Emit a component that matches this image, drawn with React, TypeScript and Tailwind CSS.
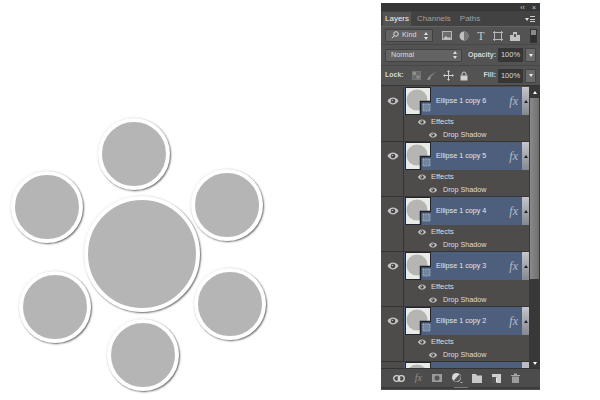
import React from "react";

const Eye = ({ className = "" }: { className?: string }) => (
  <svg width="12" height="8" viewBox="0 0 12 8" className={className}>
    <path d="M0.5 4C2 1.6 4 .6 6 .6s4 1 5.500 3.400C10 6.400 8 7.400 6 7.400S2 6.400 .5 4z" fill="#c4c4c4" />
    <circle cx="6" cy="4" r="2.300" fill="#444" />
    <circle cx="5.400" cy="3.400" r=".7" fill="#c4c4c4" />
  </svg>
);

const Thumb = () => (
  <svg width="26" height="28" viewBox="0 0 26 28" className="shrink-0">
    <rect x=".5" y=".5" width="25" height="27" fill="#e9ebe6" stroke="#22252b" />
    <circle cx="12" cy="13" r="10.500" fill="#b5b5b3" />
    <path d="M26 14h-10v14h10z" fill="#4f6180" />
    <path d="M15.500 28v-13.500h10.500" fill="none" stroke="#1c1f25" strokeWidth="1.500" />
    <rect x="18" y="17" width="7" height="7" fill="#6f869e" stroke="#c4d2de" strokeWidth=".7" strokeDasharray="1 .7" />
  </svg>
);

const Layer = ({ name }: { name: string }) => (
  <div className="flex h-[55px] shrink-0 border-b border-[#353535]">
    <div className="flex h-[28px] w-[22px] shrink-0 items-center justify-center pl-[1px]">
      <Eye />
    </div>
    <div className="flex min-w-0 flex-1 flex-col border-l border-[#333]">
      <div className="flex h-[28px] shrink-0 items-center bg-[#4e5f7d] pl-[1px] text-[#e4e7ec]">
        <Thumb />
        <span className="ml-[5px] flex-1 text-[7.200px] leading-none">{name}</span>
        <span className="mr-[4px] font-['Liberation_Serif',serif] text-[12px] italic leading-none text-[#b4bcc9]">fx</span>
        <div className="flex h-full w-[7px] items-center justify-center bg-gradient-to-b from-[#c6c6cc] to-[#84888f]">
          <div className="h-0 w-0 border-x-[2px] border-b-[3px] border-x-transparent border-b-[#222]" />
        </div>
      </div>
      <div className="flex h-[13px] items-center pl-[12px] text-[7.500px] leading-none text-[#dedede]">
        <Eye className="mr-[3px] scale-75" />
        Effects
      </div>
      <div className="flex h-[13px] items-center pl-[23px] text-[7.200px] leading-none text-[#dedede]">
        <Eye className="mr-[4px] scale-75" />
        Drop Shadow
      </div>
    </div>
  </div>
);

const Spin = () => (
  <div className="flex flex-col gap-[2px]">
    <div className="h-0 w-0 border-x-[2px] border-b-[3px] border-x-transparent border-b-[#ddd]" />
    <div className="h-0 w-0 border-x-[2px] border-t-[3px] border-x-transparent border-t-[#ddd]" />
  </div>
);

const Select = ({ className, children }: { className: string; children: React.ReactNode }) => (
  <div className={`flex h-[13px] items-center justify-between rounded-[1px] border border-[#414141] bg-[#636363] pl-[5px] pr-[4px] text-[7.200px] text-[#dcdcdc] ${className}`}>
    {children}
    <Spin />
  </div>
);

const PercentField = () => (
  <div className="flex items-center gap-[2px]">
    <div className="flex h-[14px] w-[25px] items-center justify-center bg-[#363636] text-[7.500px] text-[#d8d8d8]">100%</div>
    <div className="flex h-[14px] w-[11px] items-center justify-center border border-[#444] bg-[#6a6a6a]">
      <div className="h-0 w-0 border-x-[2px] border-t-[3px] border-x-transparent border-t-[#eee]" />
    </div>
  </div>
);

const Circle = ({ className }: { className: string }) => (
  <div className={`absolute rounded-full border-[4px] border-white bg-[#b5b5b5] shadow-[1px_1px_2px_rgba(0,0,0,0.6),-1px_-1px_3px_rgba(0,0,0,0.04)] ${className}`} />
);

const App = () => {
  return (
    <div className="flex h-[400px] w-[600px] overflow-hidden bg-white font-['Liberation_Sans',sans-serif]">
      <div className="relative h-full w-[381px] shrink-0">
        <Circle className="left-[98px] top-[118px] h-[72px] w-[72px]" />
        <Circle className="left-[11px] top-[171px] h-[72px] w-[72px]" />
        <Circle className="left-[191px] top-[169px] h-[72px] w-[72px]" />
        <Circle className="left-[84px] top-[196px] h-[116px] w-[116px]" />
        <Circle className="left-[19px] top-[271px] h-[72px] w-[72px]" />
        <Circle className="left-[194px] top-[268px] h-[72px] w-[72px]" />
        <Circle className="left-[107px] top-[319px] h-[72px] w-[72px]" />
      </div>

      <div className="mt-[3px] flex h-[387px] w-[159px] shrink-0 flex-col bg-[#505050]">
        {/* title bar */}
        <div className="flex h-[8px] items-center justify-end gap-[7px] bg-[#363636] pr-[4px] text-[7px] leading-none text-[#cfcfcf]">
          <span>‹‹</span>
          <span>×</span>
        </div>

        {/* tabs */}
        <div className="flex h-[15px] items-end bg-[#424242] pl-[2px] text-[8px] leading-none text-[#a0a0a0]">
          <div className="flex h-[14px] w-[28px] items-center justify-center bg-[#535353] text-[#f0f0f0]">Layers</div>
          <div className="ml-[6px] flex h-[14px] items-center">Channels</div>
          <div className="ml-[9px] flex h-[14px] items-center">Paths</div>
          <div className="ml-auto mr-[5px] flex h-[14px] items-center gap-[1px]">
            <div className="h-0 w-0 border-x-[2px] border-t-[3px] border-x-transparent border-t-[#ddd]" />
            <div className="h-[6px] w-[5px] border-y border-[#ccc] bg-[linear-gradient(#ccc,#ccc)] bg-[length:100%_1px] bg-center bg-no-repeat" />
          </div>
        </div>

        {/* filter row */}
        <div className="flex h-[18px] items-center border-t border-[#626262] bg-[#535353] pl-[4px] pr-[3px]">
          <Select className="w-[48px]">
            <span className="flex items-center gap-[3px]">
              <svg width="8" height="8" viewBox="0 0 8 8" fill="none" stroke="#ddd">
                <circle cx="5" cy="3" r="2.300" />
                <path d="M3.400 4.600L.8 7.200" />
              </svg>
              Kind
            </span>
          </Select>
          <svg width="10" height="9" viewBox="0 0 10 9" className="ml-[9px]">
            <rect x=".5" y=".5" width="9" height="8" fill="#6d6d6d" stroke="#b5b5b5" />
            <path d="M1 8l3-3 2 2 2-1 1 2z" fill="#c5c5c5" />
          </svg>
          <svg width="10" height="10" viewBox="0 0 10 10" className="ml-[7px]">
            <circle cx="5" cy="5" r="4.500" fill="#c0c0c0" />
            <path d="M5 .5a4.500 4.500 0 0 1 0 9z" fill="#777" />
          </svg>
          <span className="ml-[7px] w-[10px] text-center font-['Liberation_Serif',serif] text-[12px] leading-none text-[#c8c8c8]">T</span>
          <svg width="10" height="10" viewBox="0 0 10 10" className="ml-[7px]" fill="none" stroke="#b8b8b8">
            <rect x="1.500" y="1.500" width="7" height="7" />
            <path d="M0 1.500h3M1.500 0v3M7 1.500h3M8.500 0v3M0 8.500h3M1.500 7v3M7 8.500h3M8.500 7v3" />
          </svg>
          <svg width="10" height="10" viewBox="0 0 10 10" className="ml-[7px]">
            <path d="M0 10V4h3V1h4v3h3v6z" fill="#c2c2c2" />
            <path d="M4 3h2v3H4z" fill="#555" />
          </svg>
          <div className="ml-auto h-[14px] w-[7px] border border-[#333] bg-gradient-to-b from-[#8a8a8a] from-40% to-[#2f2f2f] to-40%" />
        </div>

        {/* blend mode row */}
        <div className="flex h-[21px] items-center border-t border-[#474747] bg-[#535353] pl-[4px] pr-[4px]">
          <Select className="w-[77px]">
            <span>Normal</span>
          </Select>
          <span className="ml-[6px] text-[7px] font-bold text-[#d6d6d6]">Opacity:</span>
          <div className="ml-auto">
            <PercentField />
          </div>
        </div>

        {/* lock row */}
        <div className="flex h-[20px] items-center border-t border-[#474747] bg-[#535353] pl-[4px] pr-[4px]">
          <span className="text-[7px] font-bold text-[#d6d6d6]">Lock:</span>
          <svg width="9" height="9" viewBox="0 0 9 9" className="ml-[8px]">
            <rect x=".5" y=".5" width="8" height="8" fill="#6a6a6a" stroke="#8c8c8c" strokeDasharray="1 1" />
            <path d="M1 1h3v3H1zM4.500 4.500h3v3h-3z" fill="#8f8f8f" />
          </svg>
          <svg width="11" height="10" viewBox="0 0 11 10" className="ml-[5px]">
            <path d="M10.500 .5L5 5.500l-1-1z" fill="#8e8e8e" />
            <path d="M4 5c-2 0-1.500 3-3.500 3.500 2 1 4.500 .5 4.500-2.500z" fill="#8e8e8e" />
          </svg>
          <svg width="11" height="11" viewBox="0 0 11 11" className="ml-[6px]" fill="none" stroke="#cfcfcf">
            <path d="M5.500 1v9M1 5.500h9" />
            <path d="M5.500 0L4 2h3zM5.500 11L4 9h3zM0 5.500L2 4v3zM11 5.500L9 4v3z" fill="#cfcfcf" stroke="none" />
          </svg>
          <svg width="8" height="10" viewBox="0 0 8 10" className="ml-[6px]">
            <path d="M2 4.500V3a2 2 0 0 1 4 0v1.500" fill="none" stroke="#cfcfcf" />
            <rect x="0.500" y="4.500" width="7" height="5" fill="#cfcfcf" />
          </svg>
          <span className="ml-auto mr-[2px] text-[7px] font-bold text-[#d6d6d6]">Fill:</span>
          <PercentField />
        </div>

        {/* layer list + scrollbar */}
        <div className="flex h-[283px] border-t border-[#363636]">
          <div className="flex min-w-0 flex-1 flex-col overflow-hidden bg-[#4e4b4b]">
            <div className="h-[1px] shrink-0" />
            <Layer name="Ellipse 1 copy 6" />
            <Layer name="Ellipse 1 copy 5" />
            <Layer name="Ellipse 1 copy 4" />
            <Layer name="Ellipse 1 copy 3" />
            <Layer name="Ellipse 1 copy 2" />
            <div className="ml-[23px] flex h-[28px] shrink-0 bg-[#4e5f7d] pl-[1px]">
              <Thumb />
              <div className="ml-auto h-full w-[7px] bg-[#bcbcc4]" />
            </div>
          </div>
          <div className="flex w-[11px] shrink-0 flex-col bg-[#383838]">
            <div className="flex h-[12px] shrink-0 items-center justify-center">
              <div className="h-0 w-0 border-x-[2px] border-b-[3px] border-x-transparent border-b-white" />
            </div>
            <div className="mx-[1px] h-[181px] bg-gradient-to-r from-[#8a8a8a] to-[#6f6f6f]" />
            <div className="mt-auto flex h-[10px] shrink-0 items-center justify-center">
              <div className="h-0 w-0 border-x-[2px] border-t-[3px] border-x-transparent border-t-white" />
            </div>
          </div>
        </div>

        {/* footer */}
        <div className="flex h-[19px] items-center justify-between border-t border-[#343434] bg-[#4c4c4c] pl-[12px] pr-[20px]">
          <svg width="12" height="7" viewBox="0 0 12 7" fill="none" stroke="#d4d4d4" strokeWidth="1.300">
            <rect x=".7" y=".7" width="6" height="5.600" rx="2.800" />
            <rect x="5.300" y=".7" width="6" height="5.600" rx="2.800" />
          </svg>
          <span className="font-['Liberation_Serif',serif] text-[10px] italic leading-none text-[#8c8c8c]">fx</span>
          <svg width="10" height="8" viewBox="0 0 10 8">
            <rect width="10" height="8" fill="#9a9a9a" />
            <circle cx="5" cy="4" r="2.500" fill="#555" />
          </svg>
          <svg width="11" height="10" viewBox="0 0 11 10">
            <circle cx="4.500" cy="4.500" r="4.500" fill="#d8d8d8" />
            <path d="M7.500 1.200a4.500 4.500 0 0 1-6 6.600z" fill="#555" />
            <path d="M8 9h3l-1.500 1z" fill="#ddd" />
          </svg>
          <svg width="10" height="9" viewBox="0 0 10 9">
            <path d="M0 9V0h4l1 1.500h5V9z" fill="#c8c8c8" />
          </svg>
          <svg width="9" height="9" viewBox="0 0 9 9">
            <path d="M0 0h9v9H0z" fill="#cfcfcf" />
            <path d="M0 3h5v6H0z" fill="#555" />
            <path d="M4 3.500h1v5H4z" fill="#eee" />
          </svg>
          <svg width="9" height="10" viewBox="0 0 9 10">
            <path d="M0 2h9v1H0zM3 .5h3V2H3z" fill="#a8a8a8" />
            <path d="M1 3.500h7V10H1z" fill="#9c9c9c" />
          </svg>
        </div>
        <div className="flex h-[2px] justify-center bg-[#3c3c3c]">
          <div className="h-[1px] w-[14px] bg-[#777]" />
        </div>
      </div>
    </div>
  );
};

export default App;
